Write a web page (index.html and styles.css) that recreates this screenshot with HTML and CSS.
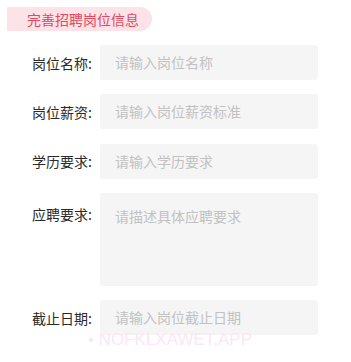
FILE: index.html
```html
<!DOCTYPE html>
<html lang="zh">
<head>
<meta charset="utf-8">
<link rel="stylesheet" href="styles.css">
</head>
<body>
<div class="page">
  <div class="tag">完善招聘岗位信息</div>
  <div class="form">
    <div class="row">
      <div class="label">岗位名称:</div>
      <div class="input">请输入岗位名称</div>
    </div>
    <div class="row">
      <div class="label">岗位薪资:</div>
      <div class="input">请输入岗位薪资标准</div>
    </div>
    <div class="row">
      <div class="label">学历要求:</div>
      <div class="input">请输入学历要求</div>
    </div>
    <div class="row row-top">
      <div class="label">应聘要求:</div>
      <div class="input textarea">请描述具体应聘要求</div>
    </div>
    <div class="row">
      <div class="label">截止日期:</div>
      <div class="input">请输入岗位截止日期</div>
    </div>
  </div>
  <div class="watermark">• NOFKLXAWET.APP</div>
</div>
</body>
</html>
```

FILE: styles.css
```css
html, body {
  margin: 0;
  padding: 0;
  background: #ffffff;
}
body {
  font-family: "Noto Sans CJK SC", "Noto Sans", sans-serif;
  width: 351px;
  height: 362px;
  overflow: hidden;
}
.page {
  position: relative;
  padding-top: 7px;
}
.tag {
  width: fit-content;
  margin-left: 7px;
  height: 24px;
  line-height: 24px;
  padding: 0 13px 0 20px;
  background: #fde2e7;
  color: #e4485e;
  font-size: 14px;
  border-radius: 0 12px 12px 0;
}
.form {
  margin-top: 14px;
  display: flex;
  flex-direction: column;
  gap: 14.3px;
}
.row {
  display: flex;
  align-items: center;
}
.row-top {
  align-items: flex-start;
}
.label {
  width: 90px;
  padding-left: 32px;
  box-sizing: border-box;
  margin-right: 10px;
  font-size: 14px;
  color: #2a2a2a;
  white-space: nowrap;
  line-height: 20px;
}
.row-top .label {
  padding-top: 11px;
}
.input {
  width: 218px;
  height: 35px;
  box-sizing: border-box;
  background: #f5f5f5;
  border-radius: 3px;
  padding-left: 15px;
  font-size: 14px;
  line-height: 35px;
  color: #c2c2c2;
  white-space: nowrap;
}
.textarea {
  height: 93px;
  line-height: 20px;
  padding-top: 13px;
}
.watermark {
  position: absolute;
  left: 88px;
  top: 330px;
  font-family: "Liberation Sans", Arial, sans-serif;
  font-size: 17px;
  color: #fde6f4;
  white-space: nowrap;
}
```
